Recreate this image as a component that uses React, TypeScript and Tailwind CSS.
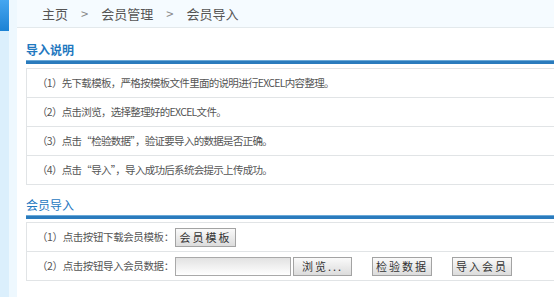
import React from "react";

const steps = [
  "（1）先下载模板，严格按模板文件里面的说明进行EXCEL内容整理。",
  "（2）点击浏览，选择整理好的EXCEL文件。",
  "（3）点击“检验数据”，验证要导入的数据是否正确。",
  "（4）点击“导入”，导入成功后系统会提示上传成功。",
];

const btn =
  "h-[19px] shrink-0 whitespace-nowrap border border-[#a3a3a3] bg-gradient-to-b from-[#fafafa] to-[#dcdcdc] text-center text-[11px] leading-[17px] text-[#333] tracking-[2px] px-0";

const SectionTitle = ({ title, bold }: { title: string; bold?: boolean }) => (
  <div>
    <div className={`h-4 text-[12px] leading-4 text-[#1f78bf] ${bold ? "font-bold" : ""}`}>{title}</div>
    <div className="mt-[2px] h-[4px] border-t border-[#6aa9d8] bg-[#2a7bbd]" />
  </div>
);

export default function App() {
  return (
    <div
      className="flex h-[297px] w-[554px] overflow-hidden bg-white text-[#555]"
      style={{ fontFamily: '"Noto Sans CJK SC", "Liberation Sans", sans-serif' }}
    >
      {/* left rail */}
      <div className="flex w-[9px] flex-col bg-[#dbeffc]">
        <div className="h-[31px] bg-gradient-to-b from-[#45a6f0] to-[#1b82d4]" />
      </div>
      <div className="w-[8px] bg-[#eef8fe]" />

      <div className="flex min-w-0 flex-1 flex-col">
        <div className="flex h-[28px] items-center gap-[13px] border-b border-[#e3e9ec] bg-[#f5fbff] pl-[25px] text-[13px] text-[#555]">
          <span>主页</span>
          <span className="text-[#888]">&gt;</span>
          <span>会员管理</span>
          <span className="text-[#888]">&gt;</span>
          <span>会员导入</span>
        </div>

        <div className="mr-[-20px] pl-[9px]">
          <div className="mt-[14px]">
            <SectionTitle title="导入说明" bold />
          </div>
          <div className="mt-[4px] border-t border-l border-[#e1e4e6]">
            {steps.map((s) => (
              <div
                key={s}
                className="flex h-[29px] items-center whitespace-nowrap border-b border-[#e1e4e6] pl-[10px] text-[10.5px] tracking-[-0.7px] text-[#555]"
              >
                {s}
              </div>
            ))}
          </div>

          <div className="mt-[12px]">
            <SectionTitle title="会员导入" />
          </div>
          <div className="mt-[3px] border-t border-l border-[#e1e4e6]">
            <div className="flex h-[29px] items-center border-b border-[#e1e4e6] pl-[10px]">
              <span className="w-[138px] shrink-0 whitespace-nowrap text-[10.5px] tracking-[-0.4px]">（1）点击按钮下载会员模板：</span>
              <button className={`${btn} w-[61px]`}>会员模板</button>
            </div>
            <div className="flex h-[29px] items-center border-b border-[#e1e4e6] pl-[10px]">
              <span className="w-[138px] shrink-0 whitespace-nowrap text-[10.5px] tracking-[-0.4px]">（2）点击按钮导入会员数据：</span>
              <div className="h-[19px] w-[116px] shrink-0 border border-[#a9a9a9] bg-gradient-to-b from-[#e2e2e2] to-white" />
              <button className={`${btn} ml-[2px] w-[59px] tracking-[1px]`}>浏览...</button>
              <button className={`${btn} ml-[20px] w-[60px]`}>检验数据</button>
              <button className={`${btn} ml-[20px] w-[60px]`}>导入会员</button>
            </div>
          </div>
        </div>
      </div>
    </div>
  );
}
